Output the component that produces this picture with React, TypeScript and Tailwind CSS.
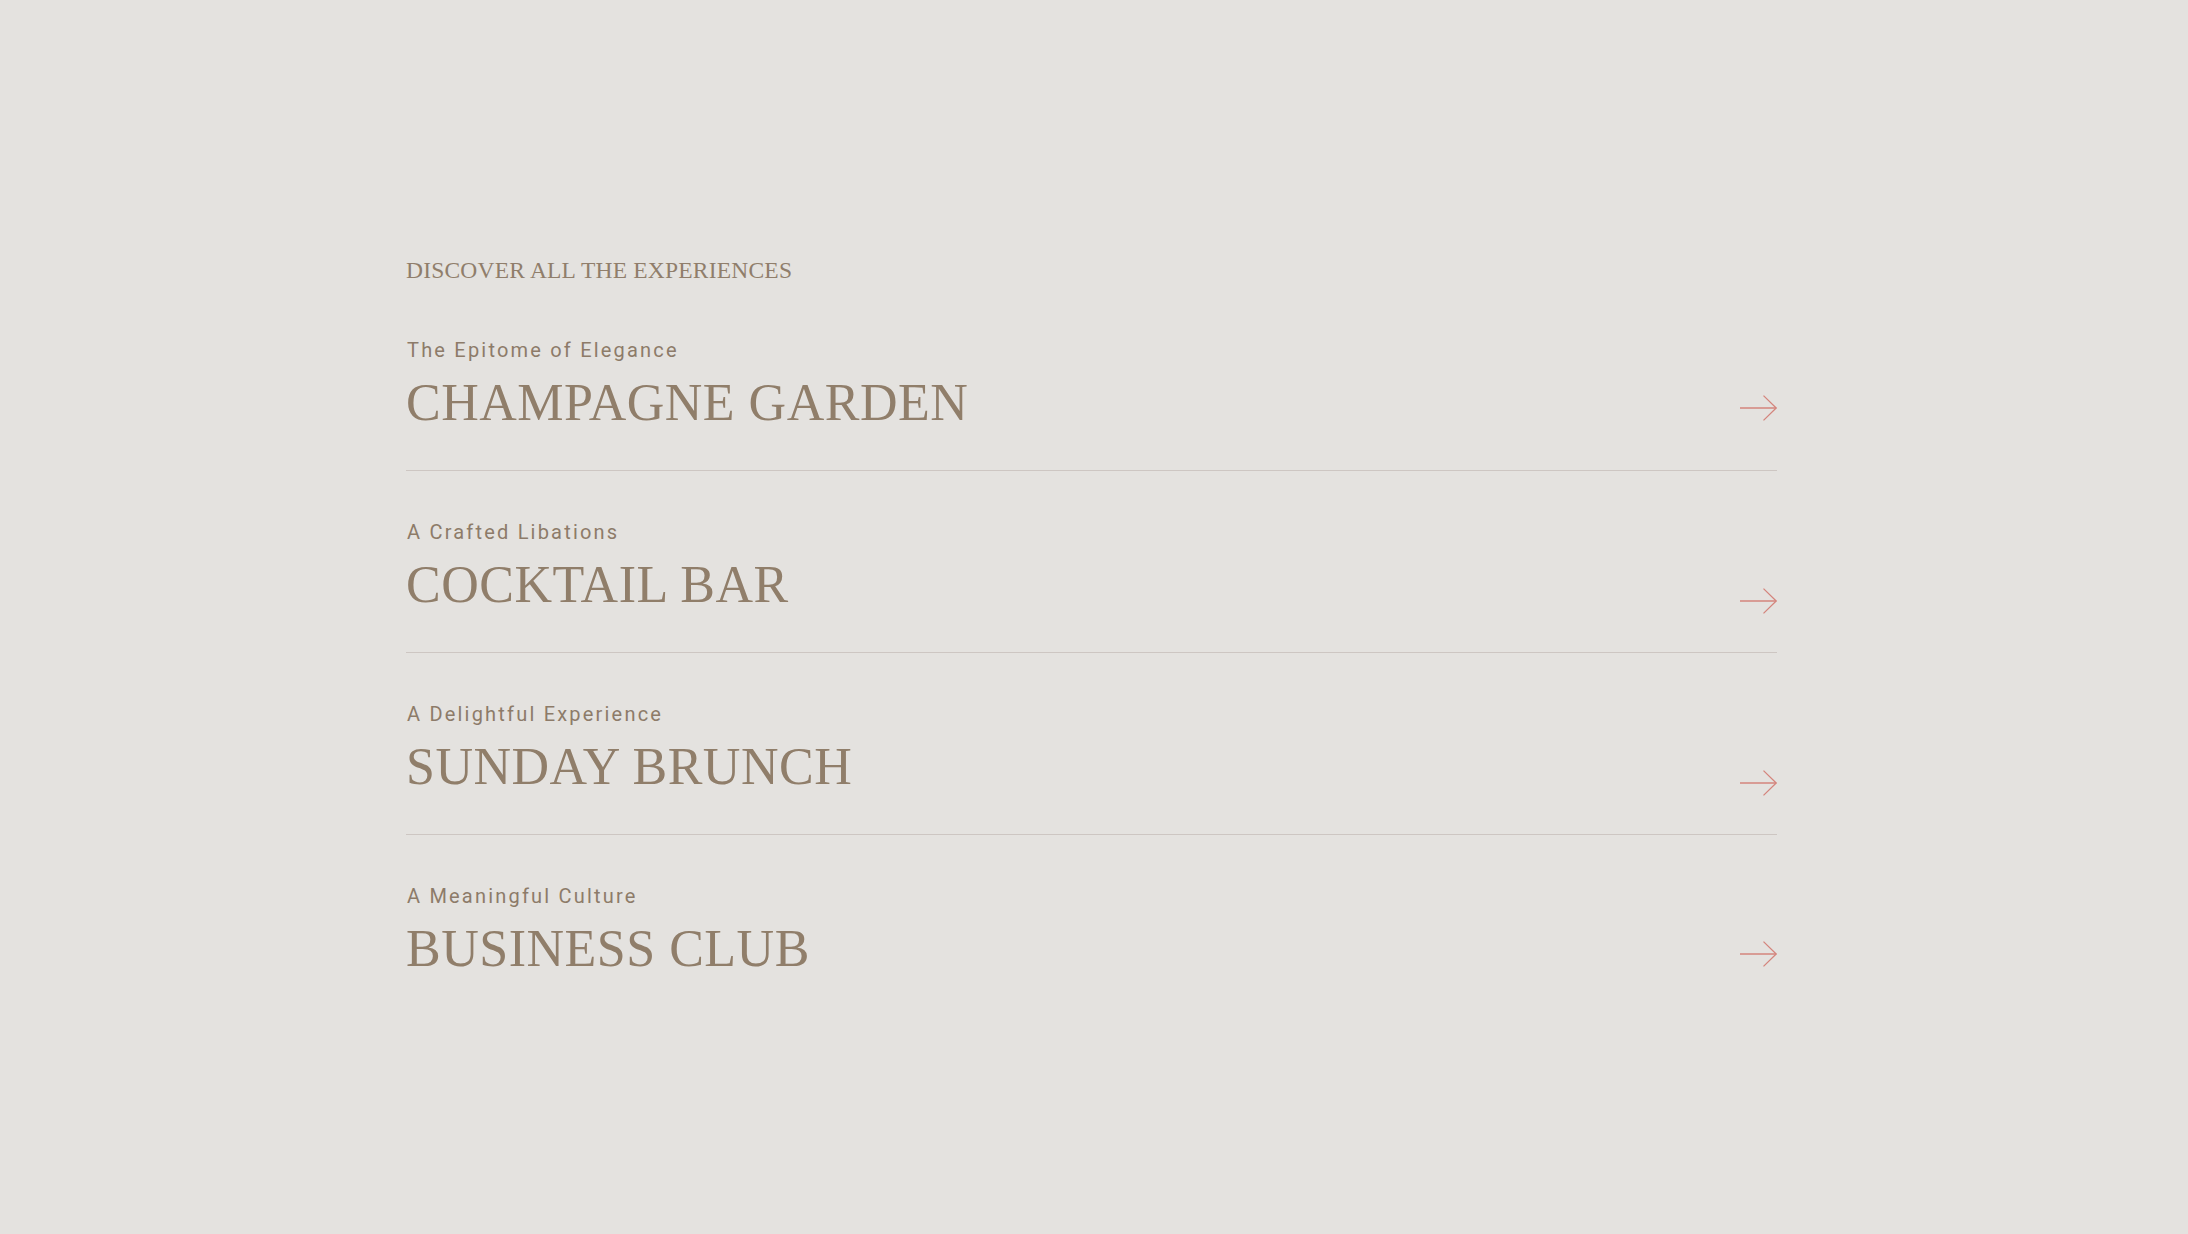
import React from "react";

const items = [
  { sub: "The Epitome of Elegance", title: "CHAMPAGNE GARDEN", arrow: "mt-[58px]" },
  { sub: "A Crafted Libations", title: "COCKTAIL BAR", arrow: "mt-[69px]" },
  { sub: "A Delightful Experience", title: "SUNDAY BRUNCH", arrow: "mt-[69px]" },
  { sub: "A Meaningful Culture", title: "BUSINESS CLUB", arrow: "mt-[58px]" },
];

function Arrow({ className }: { className: string }) {
  return (
    <svg
      className={`${className} overflow-visible shrink-0`}
      width="37"
      height="24"
      viewBox="0 0 37 24"
      fill="none"
      stroke="#d4847c"
      strokeWidth="1.3"
    >
      <line x1="0" y1="12" x2="36.2" y2="12" />
      <polyline points="23.5,-0.4 36.2,12 23.5,24.4" />
    </svg>
  );
}

export default function App() {
  return (
    <div className="min-h-[1234px] w-full bg-[#e4e2df] pt-[256px]">
      <div className="ml-[406px] w-[1371px]">
        <h2 className="font-['Liberation_Serif',serif] text-[23.5px] leading-[28px] text-[#907e6b] tracking-[0.2px]">
          DISCOVER ALL THE EXPERIENCES
        </h2>
        <div className="mt-[5px]">
          {items.map((it, i) => (
            <div
              key={it.title}
              className={
                i < items.length - 1
                  ? "flex items-start justify-between pt-[49px] pb-[39px] border-b border-[#cdc6c2] pl-[1px]"
                  : "flex items-start justify-between pt-[49px] pb-[39px] pl-[1px]"
              }
            >
              <div>
                <div className="font-['Roboto',sans-serif] text-[20px] leading-[24px] tracking-[2.2px] text-[#8d7b69]">
                  {it.sub}
                </div>
                <div className="mt-[13px] -ml-[1px] font-['Liberation_Serif',serif] text-[52px] leading-[56px] tracking-[0.5px] text-[#907e6a]">
                  {it.title}
                </div>
              </div>
              <Arrow className={it.arrow} />
            </div>
          ))}
        </div>
      </div>
    </div>
  );
}
